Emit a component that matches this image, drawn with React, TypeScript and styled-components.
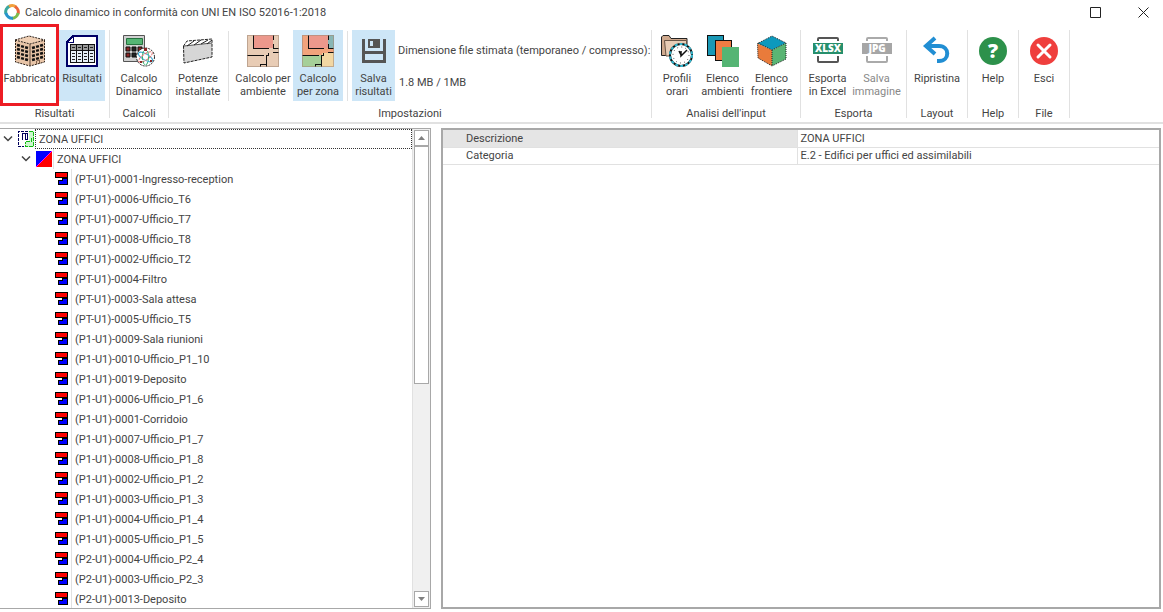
import React from "react";
import styled, { createGlobalStyle, css } from "styled-components";

const GlobalStyle = createGlobalStyle`
  * { box-sizing: border-box; }
  body { margin: 0; background: #fff; }
  button { font: inherit; color: inherit; }
`;

const Window = styled.div`
  display: flex;
  flex-direction: column;
  height: 100vh;
  overflow: hidden;
  background: #fff;
  color: #444;
  font-family: Roboto, Tahoma, "DejaVu Sans Condensed", sans-serif;
  font-size: 11px;
  line-height: 13px;
`;

const TitleBar = styled.header`
  display: flex;
  align-items: center;
  flex: none;
  height: 24px;
  padding: 0 10px 0 4px;
`;

const Title = styled.h1`
  flex: 1;
  margin: 0 0 0 5px;
  font-size: 11px;
  font-weight: normal;
`;

const CaptionButton = styled.button`
  display: flex;
  align-items: center;
  justify-content: center;
  width: 20px;
  height: 24px;
  margin-left: 28px;
  padding: 0;
  border: 0;
  background: none;
`;

const Ribbon = styled.nav`
  display: flex;
  flex: none;
  height: 100px;
  border-bottom: 2px solid #e1e1e1;
`;

const Group = styled.section<{ $width: number }>`
  display: flex;
  flex-direction: column;
  flex: none;
  width: ${(p) => p.$width}px;
  height: 94px;
  border-right: 1px solid;
  border-image: linear-gradient(transparent 7px, #e1e1e1 7px) 1;
`;

const GroupTools = styled.div<{ $start?: boolean }>`
  display: flex;
  flex: none;
  justify-content: ${(p) => (p.$start ? "flex-start" : "center")};
  height: 83px;
  padding-top: 6px;
`;

const GroupName = styled.h2`
  flex: none;
  margin: 0;
  font-size: 11px;
  font-weight: normal;
  text-align: center;
`;

const Tool = styled.button<{ $width: number; $active?: boolean }>`
  display: flex;
  flex-direction: column;
  align-items: center;
  flex: none;
  width: ${(p) => p.$width}px;
  height: 71px;
  padding: 5px 0 0;
  border: 0;
  background: ${(p) => (p.$active ? "#cde6f7" : "transparent")};
  text-align: center;
  white-space: pre;
  &:disabled { color: #888; }
  svg { flex: none; margin-bottom: 5px; }
`;

const Highlight = styled.div`
  display: flex;
  align-items: flex-start;
  flex: none;
  width: 59px;
  height: 82px;
  margin-top: -6px;
  padding-top: 3px;
  border: 3px solid #ed1c24;
  justify-content: center;
`;

const Divider = styled.span<{ $before: number; $after: number }>`
  flex: none;
  width: 1px;
  height: 70px;
  margin: 1px ${(p) => p.$after}px 0 ${(p) => p.$before}px;
  background: #e1e1e1;
`;

const FileSize = styled.dl`
  display: flex;
  flex-direction: column;
  gap: 19px;
  margin: 14px 0 0 3px;
  white-space: nowrap;
  dd { margin: 0 0 0 1px; }
`;

const Workspace = styled.main`
  display: flex;
  flex: 1;
  gap: 10px;
  min-height: 0;
  padding: 4px 2px 3px 0;
`;

const TreePanel = styled.section`
  display: flex;
  flex: 0 0 431px;
  border: 1px solid #a8a8a8;
  border-left: 0;
`;

const Tree = styled.ul`
  flex: 1;
  min-width: 0;
  margin: 0;
  padding: 0;
  overflow: hidden;
  list-style: none;
  ul { margin: 0; padding: 0; list-style: none; }
`;

const Node = styled.div<{ $indent: number }>`
  display: flex;
  align-items: center;
  height: 20px;
  padding-left: ${(p) => p.$indent}px;
`;

const Toggle = styled.button`
  display: flex;
  align-items: center;
  justify-content: center;
  width: 16px;
  height: 20px;
  padding: 0;
  border: 0;
  background: none;
`;

const NodeIcon = styled.span`
  display: flex;
  justify-content: flex-end;
  width: 19px;
  padding-right: 1px;
`;

const NodeLabel = styled.button<{ $focused?: boolean }>`
  flex: 1;
  height: 20px;
  padding: 0 3px;
  border: 0;
  border-left: 1px solid #e1e1e1;
  background: none;
  text-align: left;
  white-space: nowrap;
  ${(p) => p.$focused && css`
    border: 1px dotted #333;
  `}
`;

const ScrollBar = styled.div`
  display: flex;
  flex-direction: column;
  flex: none;
  width: 18px;
  padding: 1px;
  border-left: 1px solid #e1e1e1;
  background: #f0f0f0;
`;

const ScrollButton = styled.button`
  display: flex;
  align-items: center;
  justify-content: center;
  flex: none;
  width: 15px;
  height: 16px;
  padding: 0;
  border: 1px solid #a8a8a8;
  background: #fff;
`;

const ScrollTrack = styled.div`
  flex: 1;
`;

const ScrollThumb = styled.div`
  width: 15px;
  height: 53.4%;
  border: 1px solid #a8a8a8;
  background: #fff;
`;

const DetailPanel = styled.section`
  flex: 1;
  min-width: 0;
  border: 2px solid #a8a8a8;
`;

const Details = styled.table`
  width: 100%;
  border-collapse: collapse;
  table-layout: fixed;
  th, td {
    height: 17px;
    padding: 0 0 0 3px;
    border-bottom: 1px solid #e1e1e1;
    font-weight: normal;
    text-align: left;
  }
  th { width: 354px; padding-left: 23px; border-right: 1px solid #e1e1e1; }
  tr:first-child th { background: #e5e5e5; }
`;

type IconProps = { children: React.ReactNode; crisp?: boolean };
const Icon = ({ children, crisp }: IconProps) => (
  <svg width="32" height="32" viewBox="0 0 32 32" fill="none" aria-hidden="true"
    shapeRendering={crisp ? "crispEdges" : "auto"}>{children}</svg>
);

const BuildingIcon = () => (
  <Icon>
    <path d="M1 5 15 1l16 4-15 4z" fill="#efcfb4" />
    <path d="M1 5l15 4v22L1 27z" fill="#e8c5a8" />
    <path d="M16 9l15-4v22l-15 4z" fill="#e8c5a8" />
    <path d="M1 5 15 1l16 4-15 4zM1.500 5v22L16 31l14.500-4V5" stroke="#2b211a" strokeDasharray="2 1" />
    <path d="M16 9v22" stroke="#5b4638" />
    {[0, 1, 2, 3].map((r) => (
      <g key={r} stroke="#111" strokeWidth="2.500">
        <path d={`M3 ${10 + r * 4}l11 3`} strokeDasharray="3 1.200" />
        <path d={`M18 ${13 + r * 4}l11-3`} strokeDasharray="3 1.200" />
      </g>
    ))}
    <path d="M22.500 29.500V26l3-1v4" stroke="#80604a" />
  </Icon>
);

const ResultsIcon = () => (
  <Icon crisp>
    <path d="M7 1h24v30H1V7z" fill="#fff" stroke="#000066" strokeWidth="2" />
    <path d="M1 7h6V1" stroke="#000066" strokeWidth="1" />
    <path d="M4 10h24v18H4z" fill="#e9f2f8" />
    <path d="M4 10h24v5H4z" fill="#999" />
    <path d="M4.500 9.500h24v18h-24zM4 15.500h24M10.500 10v18M16.500 10v18M22.500 10v18" stroke="#111" />
    {[12.5, 18.5, 21.5, 24.5].map((y) => (
      <path key={y} d={`M6 ${y}h3M12 ${y}h3M18 ${y}h3M24 ${y}h3`} stroke="#222" />
    ))}
  </Icon>
);

const CalculatorIcon = () => (
  <Icon>
    <path d="M.5.500h21v26H.5z" fill="#d0d0d0" stroke="#555" />
    <path d="M3.500 3.500h16v6h-16z" fill="#55b574" stroke="#26713f" />
    {[0, 1].map((r) => [0, 1, 2].map((c) => (
      <path key={`${r}${c}`} d={`M${3 + c * 6} ${12 + r * 6}h4v4h-4z`} fill={c === 1 ? "#222" : "#8a2525"} stroke="#111" />
    )))}
    <circle cx="22.500" cy="22" r="9" fill="#fff" stroke="#222" strokeDasharray="2 1" />
    <ellipse cx="22.500" cy="22" rx="8" ry="3" stroke="#3aa8d0" transform="rotate(30 22.500 22)" />
    <ellipse cx="22.500" cy="22" rx="8" ry="3" stroke="#e07070" transform="rotate(-35 22.500 22)" strokeDasharray="3 1" />
    <ellipse cx="22.500" cy="22" rx="3" ry="8" stroke="#2fae6e" strokeDasharray="4 1" />
    <path d="M21 13h3v3h-3zM27 25h2v2h-2zM17 26h2v2h-2z" fill="#8a2525" />
  </Icon>
);

const PowerIcon = () => (
  <Icon>
    <path d="M1 11l29-3v14L2 28z" fill="#d6d6d6" />
    <path d="M1 11l5-6 24-1v4z" fill="#fff" />
    <path d="M1.500 11 5 6l25-2v18L2 28z" stroke="#222" strokeDasharray="3 1" />
    <path d="M2 11l28-3" stroke="#555" />
    <path d="M5 11l7-5M12 10l7-5M19 9l7-4M25 9l5-4" stroke="#222" />
  </Icon>
);

const PlanIcon = ({ zones }: { zones?: boolean }) => (
  <Icon crisp>
    <path d="M0 0h32v32H0z" fill={zones ? "#f1a37c" : "#e8ccb5"} />
    <path d="M7 0h19v13H7z" fill="#ec988c" />
    {zones && (
      <>
        <path d="M26 0h6v14h-6z" fill="#88b6b5" />
        <path d="M0 20h19v12H0z" fill="#a5cf98" />
        <path d="M20 18h12v14H20z" fill="#f2d7a3" />
      </>
    )}
    <path d="M6.500 0v13.500H22M26.500 0v5m0 4v4.500H32M0 20.500h17M19 20.500h2V18M26 17.500h6M19.500 21v11M13.500 32v-3H19" stroke="#111" />
    <path d="M.5.5h31v31H.5z" stroke="#a38b79" strokeOpacity=".6" />
  </Icon>
);

const SaveIcon = () => (
  <Icon crisp>
    <path d="M4 4h3v12h18V4h3v24H4z" fill="#555" />
    <path d="M10 4h12v9H10z" fill="#555" />
    <path d="M12 6h3v5h-3z" fill="#cde6f7" />
    <path d="M7 19h18v6H7z" fill="#cde6f7" />
  </Icon>
);

const ProfilesIcon = () => (
  <Icon>
    <path d="M.5 20.500V2L2 .5h6l2 3h16v17z" fill="#cfa98d" stroke="#222" />
    <path d="M5 21 3.500 5.500h22V21z" fill="#e8ccb5" stroke="#6a5546" />
    <circle cx="20" cy="20" r="11" fill="#fff" stroke="#111" strokeWidth="2" />
    <circle cx="20" cy="20" r="11" stroke="#35b8cf" strokeWidth="2" strokeDasharray="3 2" />
    <circle cx="20" cy="20" r="8" stroke="#444" strokeDasharray="1 3.190" />
    <path d="M26 15l-6 6v-5M20 20l-2-4" stroke="#111" strokeWidth="1.500" />
  </Icon>
);

const RoomsIcon = () => (
  <Icon crisp>
    <path d="M.5.500h16v20H.5z" fill="#1a98b5" stroke="#111" />
    <path d="M8.500 5.500h16v20h-16z" fill="#f07c43" stroke="#111" />
    <path d="M15 12h17v20H15z" fill="#55b574" />
  </Icon>
);

const CubeIcon = () => (
  <Icon>
    <path d="M1.500 8.500 16 1l14 7-14 7z" fill="#0c99bd" />
    <path d="M1.500 8.500 16 15v16L2 23z" fill="#e97b3b" />
    <path d="M16 15l14-7v16l-14 7z" fill="#5ab574" />
    <path d="M1.500 8.500 16 1l14 7v16l-14 7L2 23zM2 8l14 7 14-7M16 15v16" stroke="#222" strokeDasharray="1 1" />
  </Icon>
);

const FileIcon = ({ type, color, frame }: { type: string; color: string; frame: string }) => (
  <Icon>
    <rect x="6" y="3" width="20" height="24" rx="1" stroke={frame} strokeWidth="2" />
    <path d="M5 19h22v2H5zM5 6h22v2H5z" fill="#fff" />
    <path d="M1 8h30v11H1z" fill={color} />
    <text x="16" y="17" fill="#fff" fontFamily="Open Sans, sans-serif" fontSize="10" fontWeight="800" textAnchor="middle">{type}</text>
  </Icon>
);

const UndoIcon = () => (
  <Icon>
    <path d="M14 3 5 11l9 8M6 11h12c11 0 11 15 0 15h-2" stroke="#218ed3" strokeWidth="4" />
  </Icon>
);

const HelpIcon = () => (
  <Icon>
    <circle cx="16" cy="16" r="14" fill="#2d914b" />
    <text x="16" y="23" fill="#fff" fontFamily="Open Sans, sans-serif" fontSize="20" fontWeight="800" textAnchor="middle">?</text>
  </Icon>
);

const ExitIcon = () => (
  <Icon>
    <circle cx="16" cy="16" r="14" fill="#ef3f3d" />
    <path d="M10 10l12 12M22 10 10 22" stroke="#fff" strokeWidth="3" strokeLinecap="round" />
  </Icon>
);

const AppLogo = () => (
  <svg width="16" height="16" viewBox="0 0 16 16" fill="none" strokeWidth="3" aria-hidden="true">
    <path d="M2 10A6.300 6.300 0 0 1 6 2" stroke="#3aa8a0" />
    <path d="M5 2.500A6.300 6.300 0 0 1 12 3" stroke="#f2a03c" />
    <path d="M11 2.500A6.300 6.300 0 0 1 14 10" stroke="#e9653c" />
    <path d="M14 9A6.300 6.300 0 0 1 8 14.300" stroke="#7dbb4d" />
    <path d="M9 14.300A6.300 6.300 0 0 1 2 9" stroke="#2795cd" />
  </svg>
);

const Chevron = () => (
  <svg width="10" height="6" viewBox="0 0 10 6" fill="none" aria-hidden="true">
    <path d="M1 .5l4 4 4-4" stroke="#444" strokeWidth="1.500" />
  </svg>
);

const ZonesIcon = () => (
  <svg width="16" height="16" viewBox="0 0 16 16" fill="none" shapeRendering="crispEdges" aria-hidden="true">
    <path d="M11 0h5v16H7v-5h4z" fill="#ccf7cc" />
    <path d="M11 .5h4.500v15H7.500V11M8 10.500h5v-3h2" stroke="#10bb10" strokeDasharray="4 1" />
    <path d="M10 .5H.5v15H6" stroke="#00005c" strokeDasharray="3 1" />
    <path d="M4.500 9V2.500h5V8H7.500V3" stroke="#00005c" />
  </svg>
);

const ZoneIcon = () => (
  <svg width="16" height="16" viewBox="0 0 16 16" aria-hidden="true">
    <path d="M0 0h16L0 16z" fill="#00f" />
    <path d="M16 0v16H0z" fill="#f00" />
    <path d="M0 16 16 0" stroke="#f0f" />
  </svg>
);

const RoomIcon = () => (
  <svg width="16" height="16" viewBox="-1 -1 16 16" shapeRendering="crispEdges" aria-hidden="true">
    <path d="M0 0h13v13H3V8h4V6H0z" fill="#000" />
    <path d="M1 1h11v4H1z" fill="#f00" />
    <path d="M8 7h4v5H4V9h4z" fill="#00f" />
  </svg>
);

const Arrow = ({ down }: { down?: boolean }) => (
  <svg width="7" height="4" viewBox="0 0 7 4" aria-hidden="true">
    <path d={down ? "M0 0h7L3.500 4z" : "M0 4h7L3.500 0z"} fill="#808080" />
  </svg>
);

const rooms = [
  "(PT-U1)-0001-Ingresso-reception",
  "(PT-U1)-0006-Ufficio_T6",
  "(PT-U1)-0007-Ufficio_T7",
  "(PT-U1)-0008-Ufficio_T8",
  "(PT-U1)-0002-Ufficio_T2",
  "(PT-U1)-0004-Filtro",
  "(PT-U1)-0003-Sala attesa",
  "(PT-U1)-0005-Ufficio_T5",
  "(P1-U1)-0009-Sala riunioni",
  "(P1-U1)-0010-Ufficio_P1_10",
  "(P1-U1)-0019-Deposito",
  "(P1-U1)-0006-Ufficio_P1_6",
  "(P1-U1)-0001-Corridoio",
  "(P1-U1)-0007-Ufficio_P1_7",
  "(P1-U1)-0008-Ufficio_P1_8",
  "(P1-U1)-0002-Ufficio_P1_2",
  "(P1-U1)-0003-Ufficio_P1_3",
  "(P1-U1)-0004-Ufficio_P1_4",
  "(P1-U1)-0005-Ufficio_P1_5",
  "(P2-U1)-0004-Ufficio_P2_4",
  "(P2-U1)-0003-Ufficio_P2_3",
  "(P2-U1)-0013-Deposito",
];

export default function App() {
  return (
    <Window>
      <GlobalStyle />
      <TitleBar>
        <AppLogo />
        <Title>Calcolo dinamico in conformità con UNI EN ISO 52016-1:2018</Title>
        <CaptionButton aria-label="Ingrandisci">
          <svg width="11" height="11" viewBox="0 0 11 11" fill="none"><path d="M.5.500h10v10H.5z" stroke="#222" /></svg>
        </CaptionButton>
        <CaptionButton aria-label="Chiudi">
          <svg width="11" height="11" viewBox="0 0 11 11" fill="none"><path d="M.5.500l10 10M10.500.500l-10 10" stroke="#222" /></svg>
        </CaptionButton>
      </TitleBar>

      <Ribbon>
        <Group $width={110}>
          <GroupTools $start>
            <Highlight><Tool $width={52}><BuildingIcon />Fabbricato</Tool></Highlight>
            <Tool $width={46} $active><ResultsIcon />Risultati</Tool>
          </GroupTools>
          <GroupName>Risultati</GroupName>
        </Group>
        <Group $width={59}>
          <GroupTools><Tool $width={48}><CalculatorIcon />{"Calcolo\nDinamico"}</Tool></GroupTools>
          <GroupName>Calcoli</GroupName>
        </Group>
        <Group $width={483}>
          <GroupTools $start>
            <Tool $width={58}><PowerIcon />{"Potenze\ninstallate"}</Tool>
            <Divider $before={1} $after={4} />
            <Tool $width={60}><PlanIcon />{"Calcolo per\nambiente"}</Tool>
            <Tool $width={50} $active><PlanIcon zones />{"Calcolo\nper zona"}</Tool>
            <Divider $before={4} $after={4} />
            <Tool $width={43} $active><SaveIcon />{"Salva\nrisultati"}</Tool>
            <FileSize>
              <dt>Dimensione file stimata (temporaneo / compresso):</dt>
              <dd>1.8 MB / 1MB</dd>
            </FileSize>
          </GroupTools>
          <GroupName>Impostazioni</GroupName>
        </Group>
        <Group $width={149}>
          <GroupTools>
            <Tool $width={43}><ProfilesIcon />{"Profili\norari"}</Tool>
            <Tool $width={48}><RoomsIcon />{"Elenco\nambienti"}</Tool>
            <Tool $width={50}><CubeIcon />{"Elenco\nfrontiere"}</Tool>
          </GroupTools>
          <GroupName>Analisi dell'input</GroupName>
        </Group>
        <Group $width={106}>
          <GroupTools>
            <Tool $width={46}><FileIcon type="XLSX" color="#268f6c" frame="#555" />{"Esporta\nin Excel"}</Tool>
            <Tool $width={52} disabled><FileIcon type="JPG" color="#a6a6a6" frame="#aaa" />{"Salva\nimmagine"}</Tool>
          </GroupTools>
          <GroupName>Esporta</GroupName>
        </Group>
        <Group $width={61}>
          <GroupTools><Tool $width={52}><UndoIcon />Ripristina</Tool></GroupTools>
          <GroupName>Layout</GroupName>
        </Group>
        <Group $width={51}>
          <GroupTools><Tool $width={42}><HelpIcon />Help</Tool></GroupTools>
          <GroupName>Help</GroupName>
        </Group>
        <Group $width={51}>
          <GroupTools><Tool $width={42}><ExitIcon />Esci</Tool></GroupTools>
          <GroupName>File</GroupName>
        </Group>
      </Ribbon>

      <Workspace>
        <TreePanel>
          <Tree>
            <li>
              <Node $indent={0}>
                <Toggle aria-label="Comprimi"><Chevron /></Toggle>
                <NodeIcon><ZonesIcon /></NodeIcon>
                <NodeLabel $focused>ZONA UFFICI</NodeLabel>
              </Node>
              <ul>
                <li>
                  <Node $indent={18}>
                    <Toggle aria-label="Comprimi"><Chevron /></Toggle>
                    <NodeIcon><ZoneIcon /></NodeIcon>
                    <NodeLabel>ZONA UFFICI</NodeLabel>
                  </Node>
                  <ul>
                    {rooms.map((room) => (
                      <li key={room}>
                        <Node $indent={52}>
                          <NodeIcon><RoomIcon /></NodeIcon>
                          <NodeLabel>{room}</NodeLabel>
                        </Node>
                      </li>
                    ))}
                  </ul>
                </li>
              </ul>
            </li>
          </Tree>
          <ScrollBar>
            <ScrollButton aria-label="Scorri su"><Arrow /></ScrollButton>
            <ScrollTrack><ScrollThumb /></ScrollTrack>
            <ScrollButton aria-label="Scorri giù"><Arrow down /></ScrollButton>
          </ScrollBar>
        </TreePanel>
        <DetailPanel>
          <Details>
            <tbody>
              <tr><th scope="row">Descrizione</th><td>ZONA UFFICI</td></tr>
              <tr><th scope="row">Categoria</th><td>E.2 - Edifici per uffici ed assimilabili</td></tr>
            </tbody>
          </Details>
        </DetailPanel>
      </Workspace>
    </Window>
  );
}
